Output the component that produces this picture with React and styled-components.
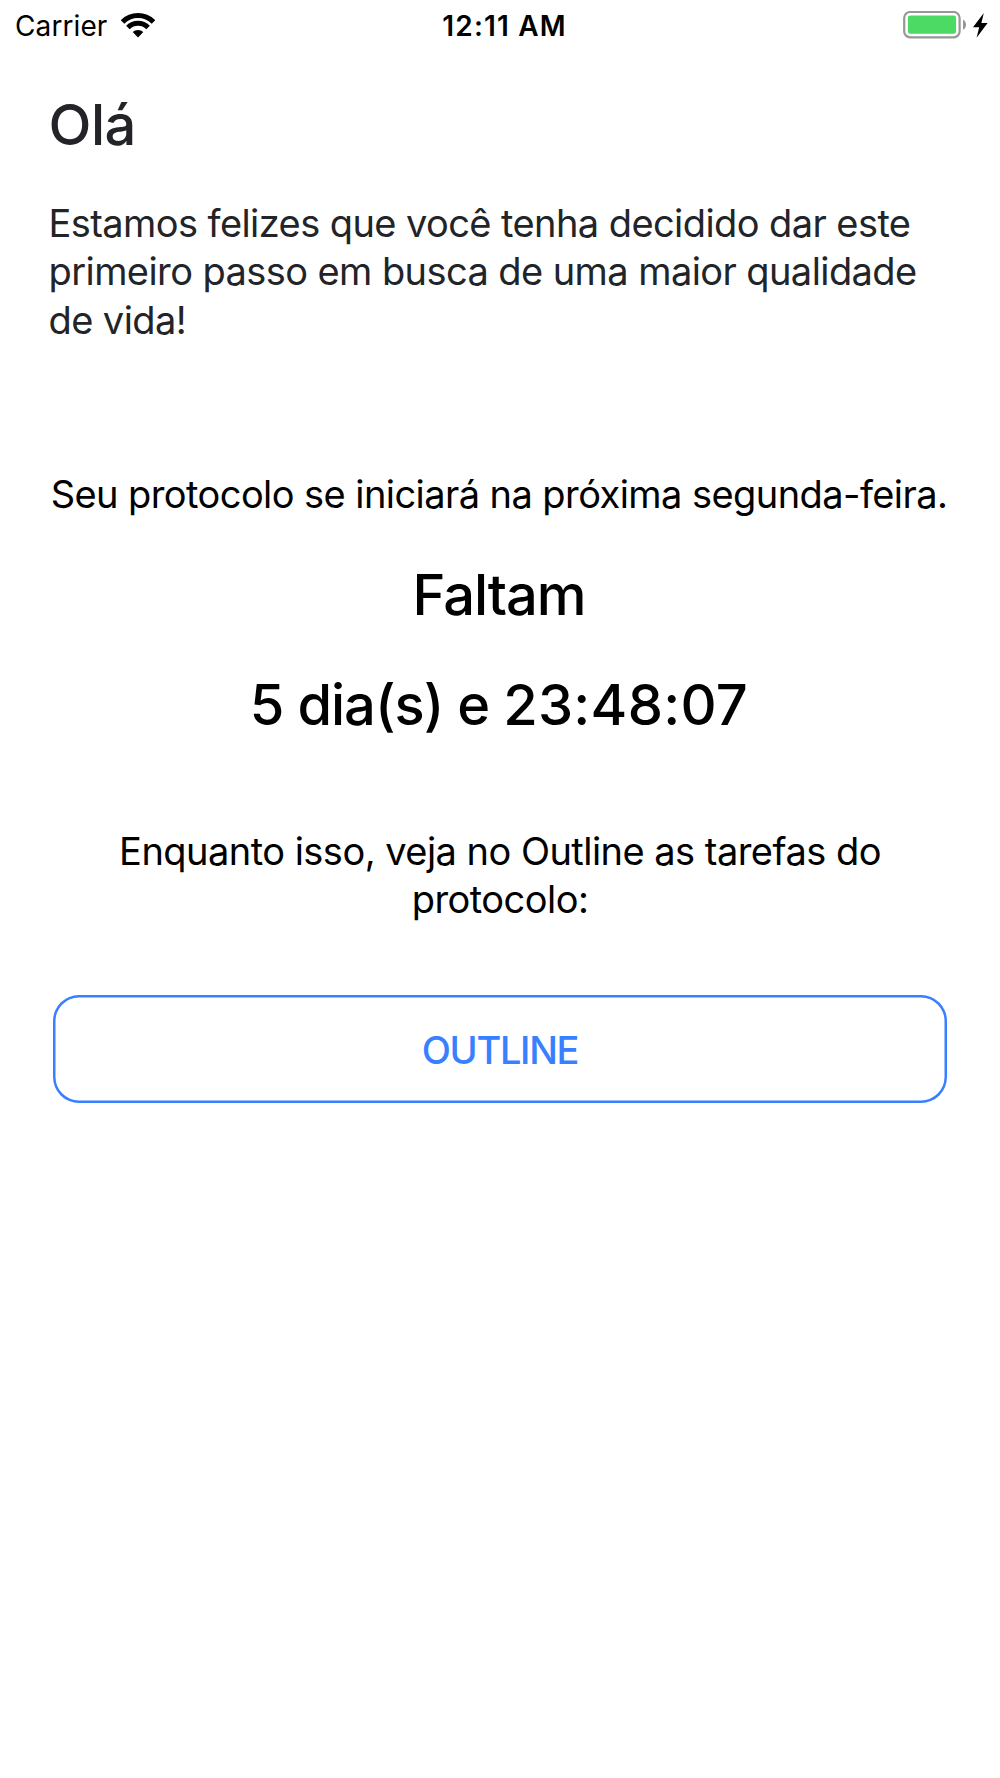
import React from 'react'
import { styled, createGlobalStyle } from 'styled-components'

const GlobalStyle = createGlobalStyle`
  *{
      box-sizing: border-box;
      margin: 0;
      padding: 0;
  }
  body{
      background: #fff;
      font-family: Inter, "Liberation Sans", sans-serif;
      color: #000;
  }
`;

function WifiIcon() {
  return (
    <svg width="34" height="25" viewBox="0 0 34 25">
      <g fill="none" stroke="#000" strokeWidth="5">
        <path d="M1.5 9A21.9 21.9 0 0 1 32.5 9" />
        <path d="M6.9 14.4A14.3 14.3 0 0 1 27.1 14.4" />
      </g>
      <path d="M11.7 19.1A7.6 7.6 0 0 1 22.3 19.1L17 24.5Z" />
    </svg>
  )
}

function BatteryIcon() {
  return (
    <svg width="64" height="28" viewBox="0 0 64 28">
      <rect x="1.2" y="1" width="55.4" height="25.4" rx="6" fill="none" stroke="#979797" strokeWidth="2.2" />
      <rect x="4.9" y="4.6" width="48.2" height="18.2" rx="2.4" fill="#4cd964" />
      <path d="M60 8.7C64 10.1 64 17.3 60 18.7Z" fill="#979797" />
    </svg>
  )
}

function BoltIcon() {
  return (
    <svg width="15" height="25" viewBox="0 0 15 25">
      <path d="M10.8 0L0 14.2H6.2L3.6 24.8L14.6 10H8.4Z" />
    </svg>
  )
}

export default function App() {
  return (
    <Screen>
      <GlobalStyle />
      <StatusBar>
        <Carrier>
          <span>Carrier</span>
          <WifiIcon />
        </Carrier>
        <Clock>12:11 AM</Clock>
        <Power>
          <BatteryIcon />
          <BoltIcon />
        </Power>
      </StatusBar>
      <Welcome>
        <Title $color="#222428" $spacing="-0.5px">Olá</Title>
        <Text $color="#222428" $spacing="-0.58px">
          Estamos felizes que você tenha decidido dar este<br />
          primeiro passo em busca de uma maior qualidade<br />
          de vida!
        </Text>
      </Welcome>
      <Countdown>
        <Text>Seu protocolo se iniciará na próxima segunda-feira.</Text>
        <Title as="h2" $spacing="-1.1px">Faltam</Title>
        <Title as="h2" $spacing="-1px">5 dia(s) e <Time>23:48:07</Time></Title>
      </Countdown>
      <Footer>
        <Text $spacing="-0.53px">
          Enquanto isso, veja no Outline as tarefas do<br />
          protocolo:
        </Text>
        <OutlineButton>OUTLINE</OutlineButton>
      </Footer>
    </Screen>
  )
}

const Screen = styled.div`
  width: 1000px;
  height: 1778px;
  overflow: hidden;
  background: #fff;
`;

const StatusBar = styled.header`
  display: grid;
  grid-template-columns: 1fr auto 1fr;
  align-items: center;
  height: 50px;
  padding: 0 12px 0 15px;
  font-size: 28px;
  line-height: 48px;
`;

const Carrier = styled.div`
  display: flex;
  align-items: center;
  gap: 14px;
  span{
      padding-top: 2px;
      letter-spacing: 0.1px;
  }
`;

const Clock = styled.div`
  padding: 2px 0 0 6px;
  font-weight: 600;
  letter-spacing: 1.15px;
`;

const Power = styled.div`
  display: flex;
  align-items: center;
  justify-content: flex-end;
  gap: 6px;
`;

const Welcome = styled.section`
  padding: 41px 48.5px 0;
`;

const Title = styled.h1`
  font-size: 56px;
  font-weight: 500;
  line-height: 68px;
  white-space: nowrap;
  color: ${props => props.$color || '#000'};
  letter-spacing: ${props => props.$spacing || '0'};
`;

const Time = styled.span`
  letter-spacing: 0.3px;
`;

const Text = styled.p`
  font-size: 38px;
  line-height: 48.4px;
  white-space: nowrap;
  color: ${props => props.$color || '#000'};
  letter-spacing: ${props => props.$spacing || '-0.57px'};
  ${Title} + &{
      margin-top: 40px;
  }
`;

const Countdown = styled.section`
  display: flex;
  flex-direction: column;
  align-items: center;
  padding-right: 2px;
  margin-top: 125.8px;
  ${Title}{
      margin-top: 42.2px;
  }
`;

const Footer = styled.section`
  display: flex;
  flex-direction: column;
  align-items: center;
  padding: 0 53px;
  margin-top: 87.8px;
  text-align: center;
`;

const OutlineButton = styled.button`
  width: 100%;
  height: 108px;
  padding-top: 2px;
  margin-top: 71.6px;
  border: none;
  border-radius: 26px;
  box-shadow: inset 0 0 0 2.5px #3880ff;
  background: transparent;
  font-family: inherit;
  font-size: 38px;
  font-weight: 500;
  letter-spacing: -1.3px;
  color: #3880ff;
`;
